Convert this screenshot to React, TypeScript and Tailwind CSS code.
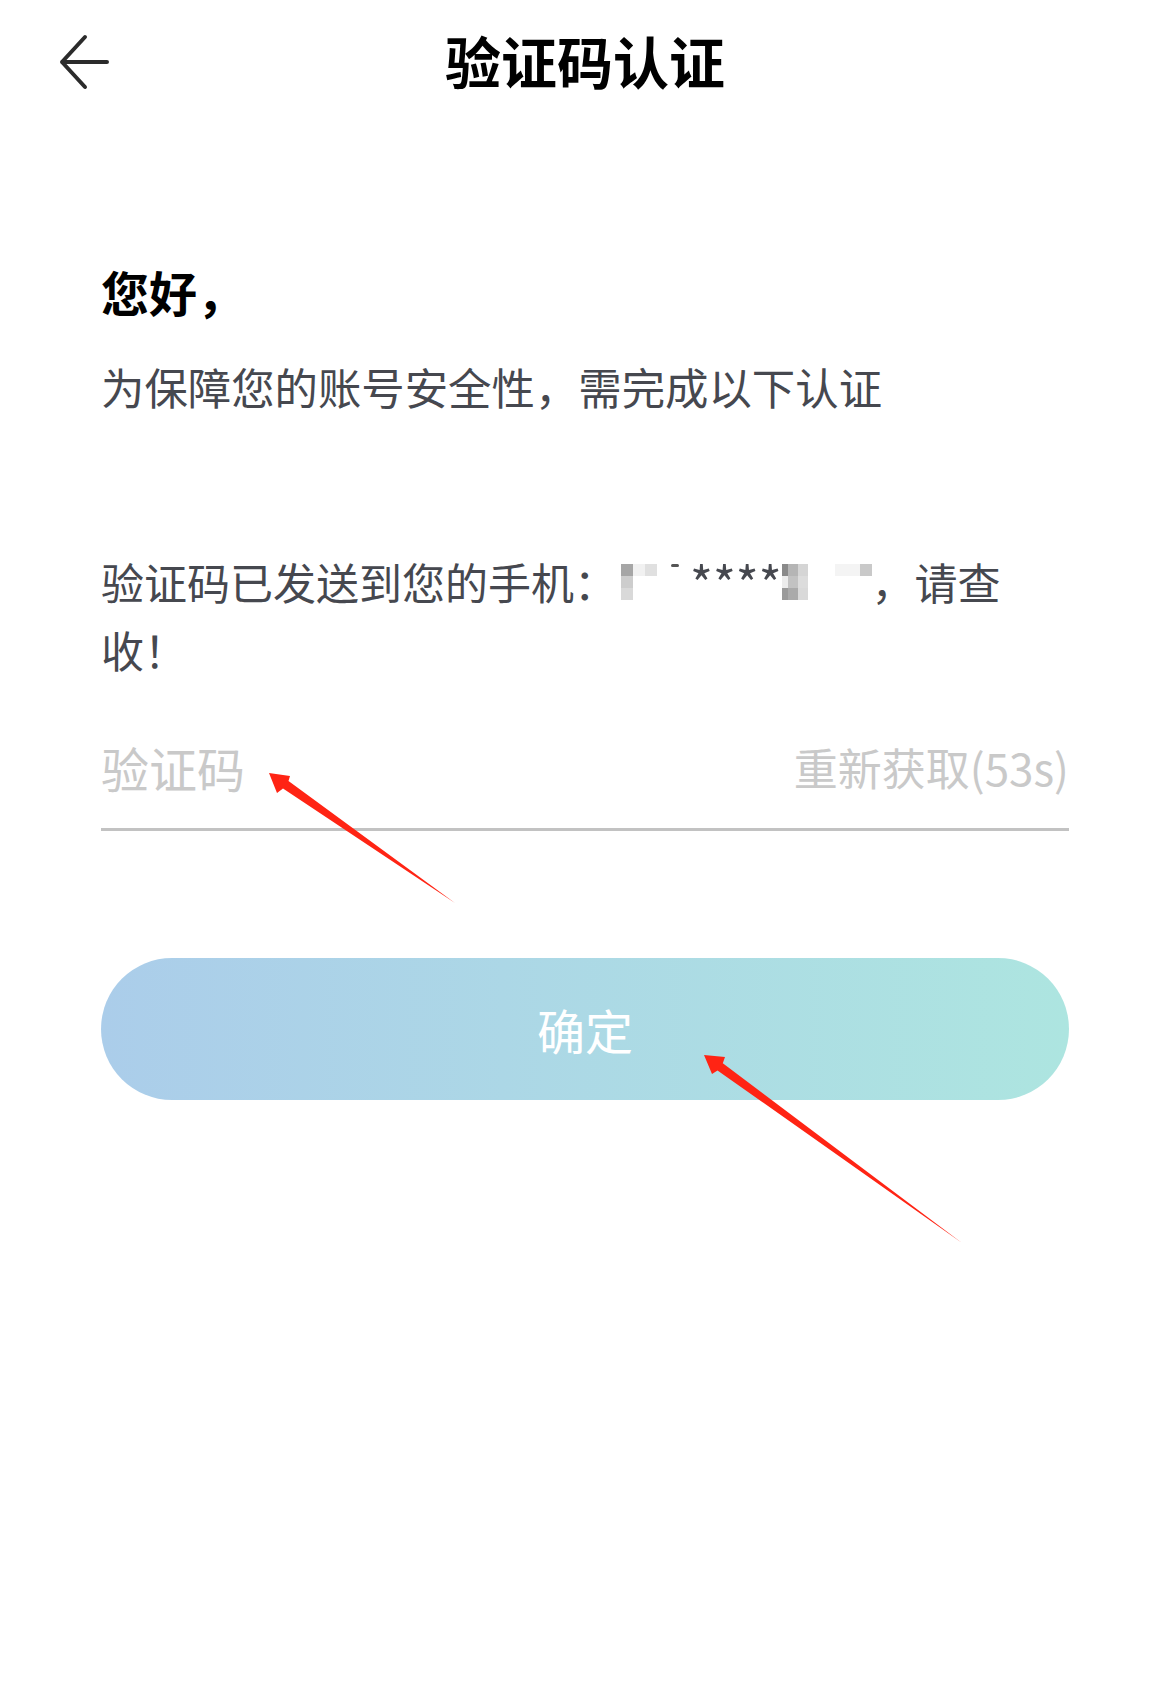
import React from 'react';

const FONT = { fontFamily: '"Noto Sans CJK SC", "Noto Sans", sans-serif' };

// blurred phone digits, columns of 3 mosaic cells
type Col = { w: number; c: [string, string, string] };
const MOSAIC_A: Col[] = [
    { w: 12, c: ['#a6a6a6', '#cdcdcd', '#d9d9d9'] },
    { w: 12, c: ['#f1f1f1', '#ffffff', '#ffffff'] },
    { w: 12, c: ['#e0e0e0', '#ffffff', '#ffffff'] },
];
const MOSAIC_B: Col[] = [
    { w: 6, c: ['#8a8a8a', '#ececec', '#9a9a9a'] },
    { w: 10, c: ['#b5b5b5', '#c2c2c2', '#aaaaaa'] },
    { w: 10, c: ['#d5d5d5', '#dcdcdc', '#d9d9d9'] },
];
const MOSAIC_C: Col[] = [
    { w: 25, c: ['#f4f4f4', '#ffffff', '#ffffff'] },
    { w: 12, c: ['#c9c9c9', '#ffffff', '#ffffff'] },
];

function Mosaic({ cols }: { cols: Col[] }) {
    return (
        <div className="flex">
            {cols.map((col, i) => (
                <div key={i} className="flex flex-col" style={{ width: col.w }}>
                    {col.c.map((bg, j) => (
                        <div key={j} className="h-[12px]" style={{ background: bg }} />
                    ))}
                </div>
            ))}
        </div>
    );
}

export default function App() {
    return (
        <div className="relative w-full min-h-[1681px] bg-white overflow-hidden" style={FONT}>
            {/* header */}
            <div className="relative h-[125px] flex items-center justify-center">
                <button className="absolute left-[56px] top-[34px] w-[56px] h-[56px] flex items-center justify-center">
                    <svg width="56" height="56" viewBox="0 0 56 56" fill="none">
                        <path d="M51 28 H6 M29 3 L6 28 L29 53" stroke="#2b2b2b" strokeWidth="4" strokeLinecap="round" strokeLinejoin="round" />
                    </svg>
                </button>
                <h1 className="text-[56px] leading-none font-bold text-black -mt-[6px]">验证码认证</h1>
            </div>

            <div className="px-[101px]">
                <div className="mt-[142px] text-[48px] leading-none font-bold text-black">您好，</div>
                <div className="mt-[50px] text-[43.4px] leading-none text-[#46484f]">为保障您的账号安全性，需完成以下认证</div>

                <div className="mt-[152px] h-[43px] flex items-center text-[43px] leading-none text-[#46484f] whitespace-nowrap">
                    <span>验证码已发送到您的手机：</span>
                    <div className="w-[4px]" />
                    <Mosaic cols={MOSAIC_A} />
                    <div className="relative w-[33px] self-stretch">
                        <div className="absolute left-[14px] top-[4px] w-[8px] h-[3px] rounded-full bg-[#555]" />
                    </div>
                    <span className="h-[43px] text-[49px] leading-[43px]">****</span>
                    <Mosaic cols={MOSAIC_B} />
                    <div className="w-[27px]" />
                    <Mosaic cols={MOSAIC_C} />
                    <span>，请查</span>
                </div>
                <div className="mt-[25px] text-[43px] leading-none text-[#46484f]">收！</div>

                <div className="mt-[35px] h-[125px] flex items-center justify-between border-b-[3px] border-[#c2c2c2]">
                    <span className="text-[48px] leading-none text-[#c9c9c9]">验证码</span>
                    <span className="text-[44px] leading-none text-[#c9c9c9]">重新获取(53s)</span>
                </div>

                <button className="mt-[127px] w-full h-[142px] rounded-full bg-linear-to-r from-[#abcdea] to-[#ade5e0] flex items-center justify-center">
                    <span className="text-[48px] leading-none text-white">确定</span>
                </button>
            </div>

            {/* red annotation arrows */}
            <svg className="absolute inset-0 pointer-events-none" width="1170" height="1681" viewBox="0 0 1170 1681">
                <polygon points="269,773 290,776 288.5,781 455,903 283,788.5 277,793" fill="#ff2414" />
                <polygon points="704,1055 725,1057 722.8,1063.2 962,1243 717.5,1070.4 712,1074" fill="#ff2414" />
            </svg>
        </div>
    );
}
